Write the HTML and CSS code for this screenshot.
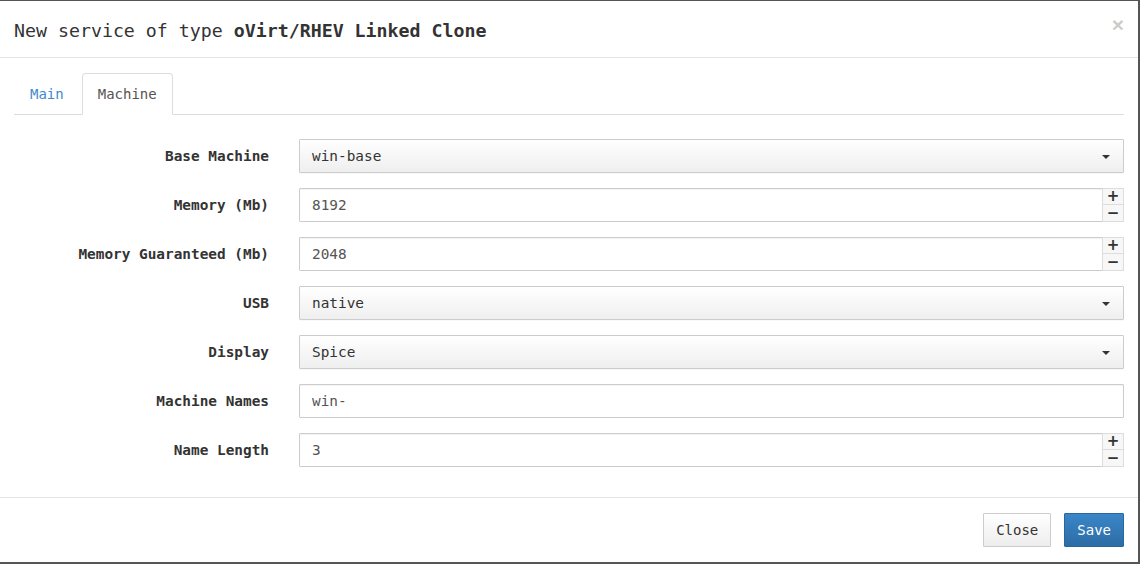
FILE: index.html
```html
<!DOCTYPE html>
<html>
<head>
<meta charset="utf-8">
<link rel="stylesheet" href="styles.css">
</head>
<body>
<div class="modal">
  <div class="modal-header">
    <h4 class="modal-title">New service of type <b>oVirt/RHEV Linked Clone</b></h4>
    <span class="close">×</span>
  </div>
  <div class="modal-body">
    <ul class="nav-tabs">
      <li class="tab"><a>Main</a></li>
      <li class="tab active"><a>Machine</a></li>
    </ul>
    <div class="form">
      <div class="form-group">
        <label class="label">Base Machine</label>
        <div class="select"><span>win-base</span><span class="caret"></span></div>
      </div>
      <div class="form-group">
        <label class="label">Memory (Mb)</label>
        <div class="spinner">
          <input class="input" value="8192">
          <div class="spin-btns"><span class="spin-btn">+</span><span class="spin-btn">−</span></div>
        </div>
      </div>
      <div class="form-group">
        <label class="label">Memory Guaranteed (Mb)</label>
        <div class="spinner">
          <input class="input" value="2048">
          <div class="spin-btns"><span class="spin-btn">+</span><span class="spin-btn">−</span></div>
        </div>
      </div>
      <div class="form-group">
        <label class="label">USB</label>
        <div class="select"><span>native</span><span class="caret"></span></div>
      </div>
      <div class="form-group">
        <label class="label">Display</label>
        <div class="select"><span>Spice</span><span class="caret"></span></div>
      </div>
      <div class="form-group">
        <label class="label">Machine Names</label>
        <input class="input" value="win-">
      </div>
      <div class="form-group">
        <label class="label">Name Length</label>
        <div class="spinner">
          <input class="input" value="3">
          <div class="spin-btns"><span class="spin-btn">+</span><span class="spin-btn">−</span></div>
        </div>
      </div>
    </div>
  </div>
  <div class="modal-footer">
    <button class="btn btn-default">Close</button>
    <button class="btn btn-primary">Save</button>
  </div>
</div>
</body>
</html>
```

FILE: styles.css
```css
* { box-sizing: border-box; }
html, body { margin: 0; padding: 0; }
body {
  background: #555;
  width: 1140px;
  height: 564px;
  overflow: hidden;
  font-family: "DejaVu Sans Mono", monospace;
  font-size: 14.4px;
  color: #333;
}
.modal {
  margin-top: 1px;
  width: 1138px;
  height: 561px;
  background: #fff;
  display: flex;
  flex-direction: column;
}
.modal-header {
  height: 57px;
  border-bottom: 1px solid #e5e5e5;
  padding: 0 14px;
  display: flex;
  align-items: center;
  justify-content: space-between;
}
.modal-title {
  margin: 0;
  font-size: 18.25px;
  font-weight: normal;
  color: #333;
  line-height: 26px;
  padding-top: 3px;
}
.modal-title b { font-weight: bold; }
.close {
  font-family: "Liberation Sans", Arial, sans-serif;
  font-size: 21px;
  font-weight: bold;
  color: #000;
  opacity: 0.2;
  line-height: 1;
  margin-right: 0;
  margin-bottom: 9px;
}
.modal-body {
  padding: 15px 14px 15px 14px;
}
.nav-tabs {
  list-style: none;
  margin: 0;
  padding: 0;
  display: flex;
  border-bottom: 1px solid #ddd;
}
.tab {
  margin-right: 2px;
  margin-bottom: -1px;
}
.tab a {
  display: block;
  padding: 10px 15px;
  line-height: 20px;
  font-size: 14px;
  border: 1px solid transparent;
  border-radius: 4px 4px 0 0;
  color: #428bca;
}
.tab.active a {
  color: #555;
  background: #fff;
  border-color: #ddd #ddd transparent #ddd;
}
.form {
  padding-top: 24px;
}
.form-group {
  display: grid;
  grid-template-columns: 255px 1fr;
  column-gap: 30px;
  align-items: center;
  margin-bottom: 15px;
}
.label {
  text-align: right;
  font-weight: bold;
  color: #333;
}
.select {
  height: 34px;
  border: 1px solid #ccc;
  border-radius: 1px;
  background: linear-gradient(#fff, #efefef);
  padding: 0 12px;
  display: flex;
  align-items: center;
  justify-content: space-between;
  color: #333;
  box-shadow: 0 1px 1px rgba(0,0,0,0.03);
}
.caret {
  width: 0;
  height: 0;
  border-left: 4px solid transparent;
  border-right: 4px solid transparent;
  border-top: 4px solid #333;
  margin-right: 1px;
  margin-top: 1px;
}
.input {
  display: block;
  width: 100%;
  height: 34px;
  border: 1px solid #ccc;
  border-radius: 1px;
  padding: 0 12px;
  font-family: "DejaVu Sans Mono", monospace;
  font-size: 14.4px;
  color: #555;
  background: #fff;
  outline: none;
  box-shadow: inset 0 1px 1px rgba(0,0,0,0.05);
}
.spinner {
  display: flex;
}
.spinner .input {
  flex: 1;
}
.spin-btns {
  width: 22px;
  display: flex;
  flex-direction: column;
  margin-left: -1px;
}
.spin-btn {
  height: 17px;
  border: 1px solid #ddd;
  background: #f7f7f7;
  display: flex;
  align-items: center;
  justify-content: center;
  font-family: "DejaVu Sans", sans-serif;
  font-weight: bold;
  font-size: 15px;
  line-height: 1;
  color: #333;
}
.spin-btn + .spin-btn {
  margin-top: -1px;
  height: 18px;
}
.modal-footer {
  margin-top: auto;
  border-top: 1px solid #e5e5e5;
  padding: 15px 14px;
  display: flex;
  justify-content: flex-end;
  gap: 13px;
}
.btn {
  height: 34px;
  padding: 0 12px;
  font-family: "DejaVu Sans Mono", monospace;
  font-size: 14px;
  border-radius: 1px;
  border: 1px solid #ccc;
}
.btn-default {
  color: #333;
  background: linear-gradient(#fff, #ededed);
  border-color: #ccc;
}
.btn-primary {
  color: #fff;
  background: linear-gradient(#3a86c8, #2d6ca5);
  border-color: #2b669a;
}
```
